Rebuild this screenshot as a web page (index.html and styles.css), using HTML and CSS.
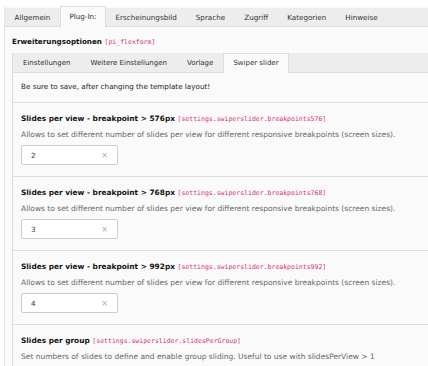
FILE: index.html
```html
<!DOCTYPE html>
<html lang="de">
<head>
  <meta charset="UTF-8">
  <title>Plug-In</title>
  <link rel="stylesheet" href="styles.css">
</head>
<body>
  <div class="editor">
    <ul class="tabs top-tabs">
      <li>Allgemein</li>
      <li class="active">Plug-In:</li>
      <li>Erscheinungsbild</li>
      <li>Sprache</li>
      <li>Zugriff</li>
      <li>Kategorien</li>
      <li>Hinweise</li>
    </ul>
    <div class="tab-body">
      <h2 class="sheet-title">Erweiterungsoptionen <code>[pi_flexform]</code></h2>
      <ul class="tabs sub-tabs">
        <li>Einstellungen</li>
        <li>Weitere Einstellungen</li>
        <li>Vorlage</li>
        <li class="active">Swiper slider</li>
      </ul>
      <div class="panel">
        <p class="note">Be sure to save, after changing the template layout!</p>

        <div class="field">
          <div class="label">Slides per view - breakpoint &gt; 576px <code>[settings.swiperslider.breakpoints576]</code></div>
          <div class="desc">Allows to set different number of slides per view for different responsive breakpoints (screen sizes).</div>
          <div class="input"><span>2</span><span class="clear">×</span></div>
        </div>

        <div class="field">
          <div class="label">Slides per view - breakpoint &gt; 768px <code>[settings.swiperslider.breakpoints768]</code></div>
          <div class="desc">Allows to set different number of slides per view for different responsive breakpoints (screen sizes).</div>
          <div class="input"><span>3</span><span class="clear">×</span></div>
        </div>

        <div class="field">
          <div class="label">Slides per view - breakpoint &gt; 992px <code>[settings.swiperslider.breakpoints992]</code></div>
          <div class="desc">Allows to set different number of slides per view for different responsive breakpoints (screen sizes).</div>
          <div class="input"><span>4</span><span class="clear">×</span></div>
        </div>

        <div class="field">
          <div class="label">Slides per group <code>[settings.swiperslider.slidesPerGroup]</code></div>
          <div class="desc">Set numbers of slides to define and enable group sliding. Useful to use with slidesPerView &gt; 1</div>
        </div>
      </div>
    </div>
  </div>
</body>
</html>
```

FILE: styles.css
```css
body {
  margin: 0;
  background: #fff;
  font-family: "DejaVu Sans", Verdana, sans-serif;
  font-size: 7.2px;
  color: #333;
}
.editor {
  margin: 6px 0 0 4px;
  border-left: 1px solid #e3e3e3;
  background: #fafafa;
  height: 360px;
  overflow: hidden;
}
.tabs {
  list-style: none;
  margin: 0;
  padding: 0;
  display: flex;
  background: #ededed;
  border-bottom: 1px solid #ddd;
}
.tabs li {
  padding: 0 8.5px;
  line-height: 18px;
  border: 1px solid transparent;
  border-bottom: none;
  margin-bottom: -1px;
  color: #333;
}
.tabs li.active {
  background: #fafafa;
  border-color: #ddd;
}
.top-tabs {
  margin-top: 2px;
}
.top-tabs li.active {
  margin-top: -2px;
  line-height: 20px;
}
.tab-body {
  padding: 9px 0 0 7px;
}
.sheet-title {
  margin: 0 0 5px;
  font-size: 7.2px;
  font-weight: bold;
  color: #111;
  line-height: 12px;
}
code {
  font-family: "DejaVu Sans Mono", "Liberation Mono", monospace;
  font-size: 6.5px;
  color: #d6336c;
  font-weight: normal;
}
.sub-tabs {
  border-left: 1px solid #ddd;
}
.sub-tabs li {
  line-height: 19px;
  font-size: 7px;
  padding: 0 9px;
}
.panel {
  border-left: 1px solid #ddd;
}
.note {
  margin: 0;
  padding: 7px 8px 9px;
  line-height: 13px;
  font-size: 7.2px;
  color: #222;
  border-bottom: 1px solid #ddd;
}
.field {
  padding: 10px 8px 11px;
  border-bottom: 1px solid #ddd;
}
.label {
  font-size: 7.4px;
  font-weight: bold;
  color: #111;
  line-height: 12px;
}
.desc {
  font-size: 7.5px;
  color: #666;
  line-height: 12px;
  margin-top: 4px;
}
.input {
  margin-top: 4px;
  width: 97px;
  height: 20px;
  box-sizing: border-box;
  background: #fff;
  border: 1px solid #ccc;
  border-radius: 2px;
  display: flex;
  align-items: center;
  justify-content: space-between;
  padding: 0 9px 0 9px;
  color: #333;
}
.clear {
  color: #aaa;
  font-size: 8px;
}
```
